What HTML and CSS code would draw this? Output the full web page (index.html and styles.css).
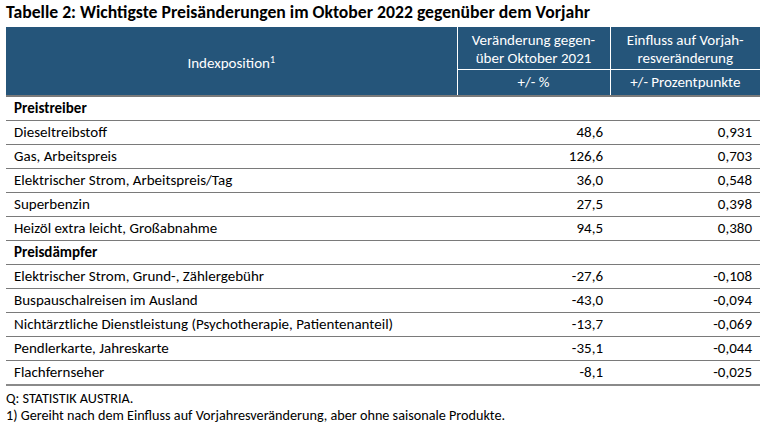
FILE: index.html
```html
<!DOCTYPE html>
<html lang="de">
<head>
<meta charset="utf-8">
<title>Tabelle 2</title>
<link rel="stylesheet" href="styles.css">
</head>
<body>
<div class="page">
  <h1 class="title">Tabelle 2: Wichtigste Preisänderungen im Oktober 2022 gegenüber dem Vorjahr</h1>
  <table class="tbl">
    <colgroup>
      <col class="c1"><col class="c2"><col class="c3">
    </colgroup>
    <thead>
      <tr class="h1row">
        <th class="hpos" rowspan="2">Indexposition<sup>1</sup></th>
        <th class="hcol">Veränderung gegen-<br>über Oktober 2021</th>
        <th class="hcol">Einfluss auf Vorjah-<br>resveränderung</th>
      </tr>
      <tr class="h2row">
        <th class="hunit">+/- %</th>
        <th class="hunit">+/- Prozentpunkte</th>
      </tr>
    </thead>
    <tbody>
      <tr class="sec"><td>Preistreiber</td><td></td><td></td></tr>
      <tr><td>Dieseltreibstoff</td><td class="num">48,6</td><td class="num n3">0,931</td></tr>
      <tr><td>Gas, Arbeitspreis</td><td class="num">126,6</td><td class="num n3">0,703</td></tr>
      <tr><td>Elektrischer Strom, Arbeitspreis/Tag</td><td class="num">36,0</td><td class="num n3">0,548</td></tr>
      <tr><td>Superbenzin</td><td class="num">27,5</td><td class="num n3">0,398</td></tr>
      <tr><td>Heizöl extra leicht, Großabnahme</td><td class="num">94,5</td><td class="num n3">0,380</td></tr>
      <tr class="sec"><td>Preisdämpfer</td><td></td><td></td></tr>
      <tr><td>Elektrischer Strom, Grund-, Zählergebühr</td><td class="num">-27,6</td><td class="num n3">-0,108</td></tr>
      <tr><td>Buspauschalreisen im Ausland</td><td class="num">-43,0</td><td class="num n3">-0,094</td></tr>
      <tr><td>Nichtärztliche Dienstleistung (Psychotherapie, Patientenanteil)</td><td class="num">-13,7</td><td class="num n3">-0,069</td></tr>
      <tr><td>Pendlerkarte, Jahreskarte</td><td class="num">-35,1</td><td class="num n3">-0,044</td></tr>
      <tr><td>Flachfernseher</td><td class="num">-8,1</td><td class="num n3">-0,025</td></tr>
    </tbody>
  </table>
  <div class="notes">
    <p>Q: STATISTIK AUSTRIA.</p>
    <p>1) Gereiht nach dem Einfluss auf Vorjahresveränderung, aber ohne saisonale Produkte.</p>
  </div>
</div>
</body>
</html>
```
FILE: styles.css
```css
html, body {
  margin: 0;
  padding: 0;
  background: #ffffff;
}
body {
  font-family: "Carlito", "Lato", "Open Sans", sans-serif;
  color: #000;
}
.page {
  padding: 2px 3px 0 6px;
}
.title {
  margin: 0;
  font-size: 17.7px;
  font-weight: 700;
  line-height: 21px;
  height: 25px;
}
.tbl {
  width: 754px;
  border-collapse: collapse;
  table-layout: fixed;
  font-size: 15px;
}
.c1 { width: 451px; }
.c2 { width: 153px; }
.c3 { width: 150px; }
thead th {
  background: #25557a;
  color: #ffffff;
  font-weight: 400;
  padding: 0;
  text-align: center;
  border-left: 1px solid #ffffff;
}
thead th.hpos {
  border-left: none;
  padding-top: 4px;
}
.hpos sup {
  font-size: 10px;
  vertical-align: 5px;
  line-height: 0;
}
.h1row th.hcol {
  height: 41px;
  line-height: 18px;
  padding-top: 1px;
  border-bottom: 1px solid #ffffff;
}
.h2row th {
  height: 25px;
  line-height: 25px;
}
tbody td {
  height: 23px;
  padding: 0 8px 0 8px;
  border-top: 1px solid #7a7a7a;
  line-height: 23px;
  white-space: nowrap;
}
tbody tr:first-child td {
  border-top: 2px solid #7a7a7a;
}
tbody tr:last-child td {
  border-bottom: 2px solid #8a8a8a;
}
tbody td.num {
  text-align: right;
  padding-right: 7px;
}
tbody td.n3 {
  padding-right: 8px;
}
tr.sec td {
  font-weight: 700;
}
.notes {
  margin-top: 4px;
  font-size: 14.2px;
  line-height: 17px;
}
.notes p {
  margin: 0;
}
```
